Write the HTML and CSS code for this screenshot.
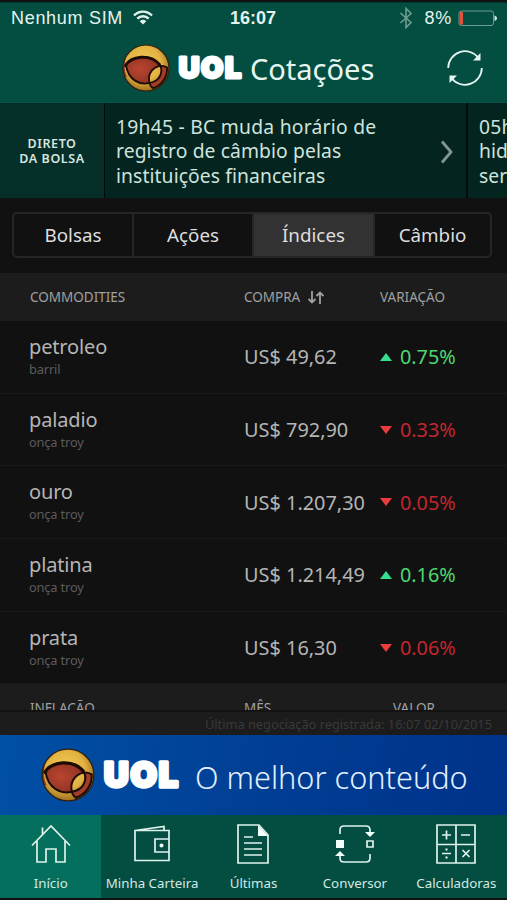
FILE: index.html
```html
<!DOCTYPE html>
<html lang="pt-BR">
<head>
    <meta charset="UTF-8">
    <meta name="viewport" content="width=device-width, initial-scale=1.0">
    <title>UOL Cotações</title>
    <link rel="stylesheet" href="styles.css">
</head>
<body>

<svg width="0" height="0" class="defs">
    <defs>
        <radialGradient id="ouro" cx="45%" cy="40%" r="62%">
            <stop offset="0" stop-color="#f3cd55"/>
            <stop offset="0.6" stop-color="#e2b243"/>
            <stop offset="1" stop-color="#9a6a1c"/>
        </radialGradient>
        <radialGradient id="brasa" cx="40%" cy="45%" r="60%">
            <stop offset="0" stop-color="#b9452f"/>
            <stop offset="1" stop-color="#8f3324"/>
        </radialGradient>
        <clipPath id="bola"><circle cx="24" cy="24" r="23"/></clipPath>
        <symbol id="esfera" viewBox="0 0 48 48">
            <circle cx="24" cy="24" r="23" fill="url(#ouro)"/>
            <g clip-path="url(#bola)">
                <path d="M4 13C2 19 2 27 5 33L0 34V13Z" fill="#983927"/>
                <path d="M4 21C8 13 28 9 38 21C31 24 26 32 28 39C17 41 6 35 4 21Z" fill="url(#brasa)"/>
                <path d="M38 21C41 28 37 36 28 39L31 44C40 42 45 33 45 23Z" fill="#a33d29"/>
                <path d="M3 23C7 12 28 9 38 21C41 27 39 35 31 38C17 43 6 35 4 21" fill="none" stroke="#1d0b05" stroke-width="1.8"/>
                <path d="M3 22C9 12 28 9 38 21" fill="none" stroke="#1d0b05" stroke-width="2.8"/>
                <path d="M46 24C37 18 26 26 27 36C27 40 29 43 32 45M45 23C46 33 39 42 31 44" fill="none" stroke="#1d0b05" stroke-width="1.8"/>
            </g>
            <circle cx="24" cy="24" r="23" fill="none" stroke="#33200c" stroke-width="1.2"/>
        </symbol>
    </defs>
</svg>

<div class="app">
    <header class="topo">
        <div class="status">
            <div class="operadora">
                <span>Nenhum SIM</span>
                <svg width="20" height="16" viewBox="0 0 20 16" fill="none" stroke="#e3f3ee" stroke-width="2.4">
                    <path d="M1 5.5C6 .3 14 .3 19 5.5M4.3 8.7C7.6 5.4 12.4 5.4 15.7 8.7"/>
                    <path d="M10 14.5L6.7 11.2C8.6 9.4 11.4 9.4 13.3 11.2Z" fill="#e3f3ee" stroke="none"/>
                </svg>
            </div>
            <span class="hora">16:07</span>
            <div class="bateria">
                <svg width="14" height="22" viewBox="0 0 14 22" fill="none" stroke="#6f9d90" stroke-width="1.6">
                    <path d="M1.5 6L12 15.5L7 20.5V1.5L12 6.5L1.5 16"/>
                </svg>
                <span>8%</span>
                <svg width="40" height="16" viewBox="0 0 40 16">
                    <rect x="1" y="1" width="34.5" height="14.5" rx="2.5" fill="none" stroke="#6d9c8f"/>
                    <rect x="2" y="2" width="3" height="12.5" fill="#e0523f"/>
                    <path d="M36.5 5.5Q39 6 39 8.2Q39 10.5 36.5 11Z" fill="#d8ebe5"/>
                </svg>
            </div>
        </div>
        <div class="marca">
            <svg class="bola" width="48" height="48"><use href="#esfera"/></svg>
            <svg class="uol" width="66" height="26" viewBox="0 0 78 30"><text x="2" y="27" textLength="74">UOL</text></svg>
            <h1>Cotações</h1>
            <svg class="atualizar" width="36" height="36" viewBox="0 0 36 36" fill="none" stroke="#e6f5f0" stroke-width="1.8">
                <path d="M1.2 18A16.8 16.8 0 0 1 31.5 8M34.8 18A16.8 16.8 0 0 1 4.5 28"/>
                <path d="M33.5 3V10.500H26Z M2.500 33V25.500H10Z" fill="#e6f5f0" stroke="none"/>
            </svg>
        </div>
    </header>

    <section class="noticias">
        <div class="direto">DIRETO<br>DA BOLSA</div>
        <div class="noticia">
            <p>19h45 - BC muda horário de<br>registro de câmbio pelas<br>instituições financeiras</p>
            <svg width="14" height="24" viewBox="0 0 14 24" fill="none" stroke="#82988f" stroke-width="2.8">
                <path d="M2 1.5L11 12L2 22.5"/>
            </svg>
        </div>
        <div class="noticia proxima">
            <p>05h<br>hid<br>ser</p>
        </div>
    </section>

    <nav class="abas">
        <a>Bolsas</a>
        <a>Ações</a>
        <a class="ativa">Índices</a>
        <a>Câmbio</a>
    </nav>

    <main class="lista">
        <div class="cabecalho">
            <span>COMMODITIES</span>
            <span class="ordem">COMPRA
                <svg width="18" height="13" viewBox="0 0 18 13" fill="none" stroke="#a0a0a0" stroke-width="1.8">
                    <path d="M5 0V11.5M1.5 8L5 11.5L8.5 8M13 13V1.5M9.5 5L13 1.5L16.5 5"/>
                </svg>
            </span>
            <span>VARIAÇÃO</span>
        </div>
        <div class="linha">
            <div class="nome">petroleo<small>barril</small></div>
            <span class="preco">US$ 49,62</span>
            <span class="variacao sobe">0.75%</span>
        </div>
        <div class="linha">
            <div class="nome">paladio<small>onça troy</small></div>
            <span class="preco">US$ 792,90</span>
            <span class="variacao desce">0.33%</span>
        </div>
        <div class="linha">
            <div class="nome">ouro<small>onça troy</small></div>
            <span class="preco">US$ 1.207,30</span>
            <span class="variacao desce">0.05%</span>
        </div>
        <div class="linha">
            <div class="nome">platina<small>onça troy</small></div>
            <span class="preco">US$ 1.214,49</span>
            <span class="variacao sobe">0.16%</span>
        </div>
        <div class="linha">
            <div class="nome">prata<small>onça troy</small></div>
            <span class="preco">US$ 16,30</span>
            <span class="variacao desce">0.06%</span>
        </div>
        <div class="cabecalho inflacao">
            <span>INFLAÇÃO</span>
            <span>MÊS</span>
            <span class="valor">VALOR</span>
        </div>
    </main>

    <div class="registro">Última negociação registrada: 16:07 02/10/2015</div>

    <div class="banner">
        <svg class="bola" width="54" height="54"><use href="#esfera"/></svg>
        <svg class="uol" width="78" height="30" viewBox="0 0 78 30"><text x="2" y="27" textLength="74">UOL</text></svg>
        <span>O melhor conteúdo</span>
    </div>

    <nav class="menu">
        <a class="ativo">
            <svg width="40" height="40" viewBox="0 0 40 40">
                <path d="M1 21.5L20 2L39 21.5M6 17V38H15V25H25V38H34V17M11.500 11V3.500"/>
            </svg>
            Início
        </a>
        <a>
            <svg width="40" height="40" viewBox="0 0 40 40">
                <path d="M3 6.5H37V36.5H3ZM3 6.5L32 2.5V6.5M37 15H23V28H37"/>
                <circle cx="29.5" cy="21.5" r="2" class="cheio"/>
            </svg>
            Minha Carteira
        </a>
        <a>
            <svg width="40" height="40" viewBox="0 0 40 40">
                <path d="M5 1H26L35 11V39H5ZM11 13H20M11 19H29M11 25H29M11 31H29"/>
                <path d="M25 1L35 12H25Z" class="cheio"/>
            </svg>
            Últimas
        </a>
        <a>
            <svg width="40" height="40" viewBox="0 0 40 40">
                <path d="M5 10V6Q5 2 9 2H31Q35 2 35 6V9M35 30V34Q35 38 31 38H9Q5 38 5 34V31M32 17H38V23H32Z"/>
                <path d="M1 16H9V24H1ZM30 8H40L35 13ZM0 32H10L5 27Z" class="cheio"/>
            </svg>
            Conversor
        </a>
        <a>
            <svg width="40" height="40" viewBox="0 0 40 40">
                <path d="M1 1H39V39H1ZM20 1V39M1 20.5H39M6 11H15M10.5 6.5V15.5M25 11H34M6 29.5H15M26.5 26L33.5 33M33.5 26L26.5 33"/>
                <path d="M9.5 24.5H11.5V26.5H9.5ZM9.5 32.5H11.5V34.5H9.5Z" class="cheio"/>
            </svg>
            Calculadoras
        </a>
    </nav>
</div>

</body>
</html>
```

FILE: styles.css
```css
* {
    box-sizing: border-box;
}
body {
    margin: 0;
    background: #0b0f0e;
    font-family: "Noto Sans", "Open Sans", sans-serif;
    color: #b5b5b5;
}
.defs {
    position: absolute;
}
.app {
    width: 507px;
    height: 900px;
    padding: 2px 0;
    display: flex;
    flex-direction: column;
    overflow: hidden;
    background: #111;
}
.topo {
    height: 101px;
    flex: none;
    background: #034e41;
    border-top: 1px solid #02372f;
    border-bottom: 1px solid #075347;
}
.status {
    height: 30px;
    padding: 0 9px 0 11px;
    display: grid;
    grid-template-columns: 1fr auto 1fr;
    align-items: center;
    font-family: "Liberation Sans", Arial, sans-serif;
    font-size: 18px;
    color: #e3f3ee;
}
.operadora,
.bateria {
    display: flex;
    align-items: center;
}
.operadora {
    gap: 10px;
    letter-spacing: 0.7px;
}
.hora {
    margin-left: -3px;
    font-weight: bold;
}
.bateria {
    justify-content: flex-end;
    gap: 6px;
}
.bateria span {
    margin-left: 5px;
    letter-spacing: 0.8px;
}
.marca {
    height: 68px;
    display: flex;
    align-items: center;
    padding: 2px 24px 0 122px;
}
.uol {
    flex: none;
    overflow: visible;
    font-family: Inter, sans-serif;
    font-size: 34px;
    font-weight: 900;
    fill: #fff;
    stroke: #fff;
    stroke-width: 3.5px;
    stroke-linejoin: round;
}
.marca .uol {
    margin-left: 7px;
}
.marca h1 {
    margin: 0 0 0 7px;
    font-size: 29px;
    font-weight: 400;
    color: #e6f5f0;
}
.atualizar {
    margin-left: auto;
}
.noticias {
    height: 95px;
    flex: none;
    display: flex;
    background: #010d0a;
    overflow: hidden;
}
.direto {
    width: 104px;
    flex: none;
    display: flex;
    align-items: center;
    justify-content: center;
    padding-top: 1px;
    text-align: center;
    font-size: 12.5px;
    font-weight: 600;
    line-height: 15px;
    letter-spacing: 0.6px;
    color: #d5e5e0;
    background: #052f28;
}
.noticia {
    width: 361px;
    margin-left: 1px;
    flex: none;
    display: flex;
    align-items: center;
    justify-content: space-between;
    padding: 2px 12px 0 11px;
    background: #04251f;
}
.noticia p {
    margin: 0;
    font-size: 19.3px;
    line-height: 24.5px;
    letter-spacing: 0.1px;
    white-space: nowrap;
    color: #cfe3dd;
}
.noticia p::first-line {
    letter-spacing: 0.25px;
}
.proxima {
    margin-left: 2px;
}
.abas {
    height: 46px;
    flex: none;
    margin: 14px 15px 15px 12px;
    display: grid;
    grid-template-columns: 118px 120px 121px 1fr;
    border: 2px solid #262626;
    border-radius: 5px;
    background: #111;
}
.abas a {
    display: flex;
    align-items: center;
    justify-content: center;
    font-size: 18.8px;
    color: #dedede;
}
.abas a + a {
    border-left: 2px solid #262626;
}
.abas .ativa {
    background: #323232;
}
.lista {
    height: 437px;
    flex: none;
    overflow: hidden;
}
.cabecalho,
.linha {
    display: grid;
    grid-template-columns: 244px 136px 1fr;
    align-items: center;
}
.cabecalho {
    height: 48px;
    background: #1c1c1c;
    font-size: 13.5px;
    color: #a0a0a0;
}
.cabecalho span:first-child {
    padding-left: 30px;
}
.ordem {
    display: flex;
    align-items: center;
    gap: 7px;
}
.valor {
    padding-left: 13px;
}
.linha {
    height: 72.7px;
    border-bottom: 1px solid #1a1a1a;
}
.nome {
    padding-left: 29px;
    margin-top: -2px;
    font-size: 20px;
    line-height: 26px;
    letter-spacing: -0.15px;
}
.nome small {
    display: block;
    font-size: 12.8px;
    line-height: 18px;
    color: #5c5c5c;
}
.preco {
    font-size: 19.9px;
}
.variacao {
    display: flex;
    align-items: center;
    gap: 8px;
    font-size: 19.8px;
}
.variacao::before {
    content: "";
    border-left: 6.5px solid transparent;
    border-right: 6.5px solid transparent;
}
.sobe {
    color: #4fd870;
}
.sobe::before {
    border-bottom: 8px solid #35df8b;
}
.desce {
    color: #c4252f;
}
.desce::before {
    border-top: 8px solid #ec3b3b;
}
.registro {
    height: 25px;
    flex: none;
    padding-right: 15px;
    border-top: 2px solid #131313;
    background: #1c1c1c;
    font-size: 12.8px;
    line-height: 24px;
    text-align: right;
    color: #393939;
}
.banner {
    height: 80px;
    flex: none;
    display: flex;
    align-items: center;
    padding-left: 41px;
    background: linear-gradient(100deg, #0050a6, #003f94 50%, #00328a);
}
.banner .uol {
    margin-left: 7px;
}
.banner span {
    margin: 3px 0 0 15px;
    font-size: 30.7px;
    font-weight: 300;
    color: #e1efff;
}
.menu {
    height: 83px;
    flex: none;
    display: grid;
    grid-template-columns: repeat(5, 1fr);
    background: #034e41;
}
.menu a {
    display: flex;
    flex-direction: column;
    align-items: center;
    gap: 10px;
    padding-top: 9px;
    font-size: 13.3px;
    line-height: 18px;
    white-space: nowrap;
    color: #d3e9e3;
}
.menu .ativo {
    background: #036f5c;
}
.menu svg {
    flex: none;
    fill: none;
    stroke: #dff2ec;
    stroke-width: 1.7;
}
.menu .cheio {
    fill: #f0fffa;
    stroke: none;
}
```
